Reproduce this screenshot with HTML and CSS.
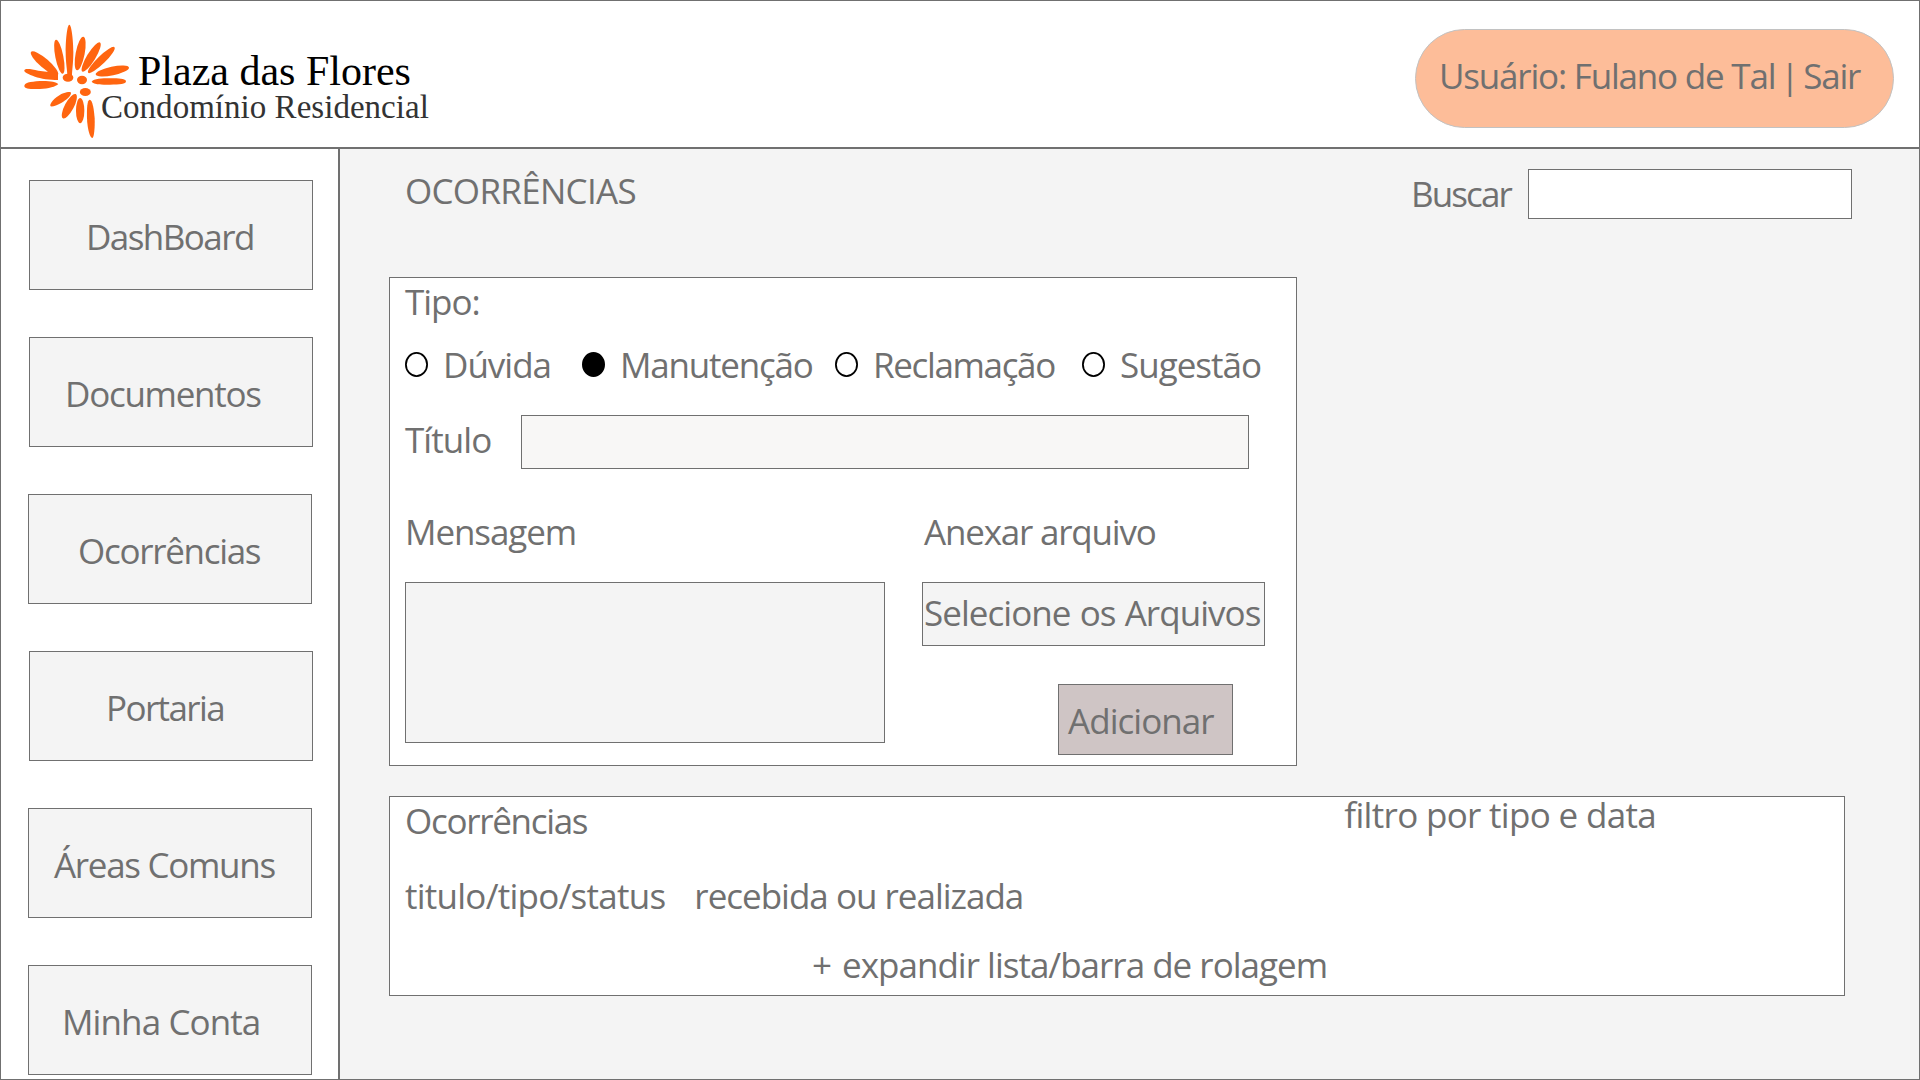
FILE: index.html
```html
<!DOCTYPE html>
<html lang="pt-BR">
<head>
<meta charset="utf-8">
<title>Plaza das Flores - Ocorrências</title>
<link rel="stylesheet" href="styles.css">
</head>
<body>
<div class="page">
  <header class="header">
    <div class="brand">
      <svg class="brand-mark" viewBox="0 0 390 390" fill="#ff6510">
        <path d="M178 29C185 29 190 80 190 110C190 145 186 165 186 182L172 182C172 165 167 145 167 110C167 80 171 29 178 29Z"/>
        <ellipse cx="148" cy="125" rx="52" ry="12" transform="rotate(78.7 148 125)"/>
        <ellipse cx="210.500" cy="115.500" rx="51" ry="13.500" transform="rotate(101 210.500 115.500)"/>
        <ellipse cx="243.500" cy="126" rx="51" ry="13" transform="rotate(121.300 243.500 126)"/>
        <ellipse cx="274" cy="135" rx="55" ry="12" transform="rotate(135.800 274 135)"/>
        <ellipse cx="307" cy="168" rx="51" ry="13" transform="rotate(-12 307 168)"/>
        <path d="M245 200C252 191 275 190 300 190C330 189 348 192 348 199C348 207 330 209 300 209C275 209 252 209 245 200Z"/>
        <ellipse cx="103.500" cy="145" rx="53" ry="14" transform="rotate(40.700 103.500 145)"/>
        <path d="M43 166C45 160 62 162 85 167L110 170L125 165L144 178V195C120 195 92 191 75 185C55 178 41 172 43 166Z"/>
        <path d="M43 213C43 204 58 200 90 198C120 197 138 201 145 207C138 215 115 221 90 222C60 223 43 221 43 213Z"/>
        <path d="M121 273C118 262 145 240 160 235C175 230 184 230 183 235C182 245 168 256 155 263C140 271 124 277 121 273Z"/>
        <ellipse cx="178" cy="273.500" rx="41" ry="13.500" transform="rotate(-62 178 273.500)"/>
        <ellipse cx="210.500" cy="287" rx="12.500" ry="38"/>
        <path d="M239 254C248 254 252 285 254 310C255 340 252 369 247 369C239 369 232 340 231 310C230 280 232 254 239 254Z"/>
        <ellipse cx="174" cy="188" rx="16" ry="12"/>
        <ellipse cx="216" cy="195" rx="15" ry="12.500"/>
        <ellipse cx="226" cy="231" rx="16.500" ry="12"/>
      </svg>
      <div class="brand-text">
        <div class="brand-name">Plaza das Flores</div>
        <div class="brand-sub">Condomínio Residencial</div>
      </div>
    </div>
    <div class="user-pill">Usuário: Fulano de Tal <span class="divider">|</span> Sair</div>
  </header>

  <div class="body">
    <nav class="sidebar">
      <a class="nav-item nav-dashboard">DashBoard</a>
      <a class="nav-item nav-documentos">Documentos</a>
      <a class="nav-item nav-ocorrencias">Ocorrências</a>
      <a class="nav-item nav-portaria">Portaria</a>
      <a class="nav-item nav-areas">Áreas Comuns</a>
      <a class="nav-item nav-conta">Minha Conta</a>
    </nav>

    <main class="main">
      <div class="topbar">
        <h1 class="title">OCORRÊNCIAS</h1>
        <div class="search">
          <label class="search-label" for="busca">Buscar</label>
          <input class="field search-input" id="busca" type="text">
        </div>
      </div>

      <form class="form-panel">
        <div class="type-label">Tipo:</div>
        <div class="options">
          <div class="option"><svg class="radio" viewBox="0 0 23 25"><ellipse cx="11.500" cy="12.500" rx="10.600" ry="11.600"/></svg><span class="opt-duvida">Dúvida</span></div>
          <div class="option"><svg class="radio radio-on" viewBox="0 0 23 25"><ellipse cx="11.500" cy="12.500" rx="10.600" ry="11.600"/></svg><span class="opt-manutencao">Manutenção</span></div>
          <div class="option"><svg class="radio" viewBox="0 0 23 25"><ellipse cx="11.500" cy="12.500" rx="10.600" ry="11.600"/></svg><span class="opt-reclamacao">Reclamação</span></div>
          <div class="option"><svg class="radio" viewBox="0 0 23 25"><ellipse cx="11.500" cy="12.500" rx="10.600" ry="11.600"/></svg><span class="opt-sugestao">Sugestão</span></div>
        </div>
        <div class="title-row">
          <label class="title-label" for="titulo">Título</label>
          <input class="field title-input" id="titulo" type="text">
        </div>
        <div class="details">
          <div class="message">
            <label class="message-label" for="mensagem">Mensagem</label>
            <textarea class="field message-input" id="mensagem"></textarea>
          </div>
          <div class="attach">
            <div class="attach-label">Anexar arquivo</div>
            <button class="button select-button" type="button">Selecione os Arquivos</button>
            <button class="button add-button" type="button">Adicionar</button>
          </div>
        </div>
      </form>

      <section class="list-panel">
        <div class="list-head">
          <h2 class="list-title">Ocorrências</h2>
          <div class="list-filter">filtro por tipo e data</div>
        </div>
        <div class="list-row">
          <span class="list-fields">titulo/tipo/status</span>
          <span class="list-origin">recebida ou realizada</span>
        </div>
        <div class="list-more"><span class="plus">+</span> expandir lista/barra de rolagem</div>
      </section>
    </main>
  </div>
</div>
</body>
</html>
```
FILE: styles.css
```css
* { box-sizing: border-box; }

body {
  margin: 0;
  color: #707070;
  font: 35px/47px "Open Sans", "Noto Sans", sans-serif;
  letter-spacing: -1px;
  white-space: nowrap;
}

h1, h2 { margin: 0; font: inherit; }

.page {
  display: flex;
  flex-direction: column;
  width: 1920px;
  height: 1080px;
  overflow: hidden;
  border: 1px solid #707070;
  background: #fff;
}

/* Header */
.header {
  display: flex;
  justify-content: space-between;
  align-items: flex-start;
  height: 148px;
  flex: none;
  padding-right: 25px;
  border-bottom: 2px solid #707070;
}
.brand { display: flex; align-items: flex-start; }
.brand-mark { width: 130px; height: 130px; margin: 14px -40px 0 9px; flex: none; }
.brand-text { margin-top: 49px; font-family: "Liberation Serif", serif; letter-spacing: 0; }
.brand-name { padding-left: 38px; font-size: 42px; line-height: 42px; color: #000; letter-spacing: 0; }
.brand-sub { margin-top: -3px; padding-left: 1px; font-size: 33px; line-height: 36px; color: #333; letter-spacing: 0.03px; }
.user-pill {
  width: 479px;
  height: 99px;
  margin-top: 28px;
  padding: 22px 0 0 23px;
  border: 1px solid #c2c2c2;
  border-radius: 50px;
  background: #fdbd99;
  letter-spacing: -1.2px;
}
.divider { margin: 0 -3px; }

.body { display: flex; flex: 1; }

/* Sidebar */
.sidebar {
  display: flex;
  flex-direction: column;
  gap: 47px;
  width: 339px;
  padding: 31px 0 0 28px;
  border-right: 2px solid #707070;
  background: #fff;
}
.nav-item {
  width: 284px;
  height: 110px;
  flex: none;
  padding-top: 32px;
  border: 1px solid #707070;
  background: #f4f4f4;
}
.nav-dashboard { padding-left: 56px; letter-spacing: -1.55px; }
.nav-documentos { padding-left: 35px; letter-spacing: -1.27px; }
.nav-ocorrencias { margin-left: -1px; padding-left: 49px; letter-spacing: -1.3px; }
.nav-portaria { padding-left: 76px; letter-spacing: -1.6px; }
.nav-areas { margin-left: -1px; padding-left: 25px; letter-spacing: -1.3px; }
.nav-conta { margin-left: -1px; padding-left: 33px; letter-spacing: -0.9px; }

/* Main area */
.main { flex: 1; background: #f4f4f4; }
.topbar {
  display: flex;
  justify-content: space-between;
  align-items: flex-start;
  height: 128px;
  padding: 18px 67px 0 65px;
}
.title { letter-spacing: -0.7px; }
.search { display: flex; margin-top: 2px; }
.search-label { width: 117px; margin-top: 1px; letter-spacing: -1.9px; }

.field {
  display: block;
  margin: 0;
  padding: 0 10px;
  border: 1px solid #707070;
  border-radius: 0;
  outline: 0;
  color: inherit;
  font: inherit;
}
.search-input { width: 324px; height: 50px; background: #fff; }

/* Form */
.form-panel {
  width: 908px;
  height: 489px;
  margin-left: 49px;
  padding-left: 15px;
  border: 1px solid #707070;
  background: #fff;
}
.options {
  display: grid;
  grid-template-columns: 177px 253px 247px auto;
  margin-top: 16px;
}
.option { display: flex; gap: 15px; }
.radio { width: 23px; height: 25px; margin-top: 11px; flex: none; fill: #fff; stroke: #000; stroke-width: 1.8; }
.radio-on { fill: #000; }
.opt-manutencao { letter-spacing: -1.22px; }
.opt-reclamacao { letter-spacing: -1.35px; }
.opt-sugestao { letter-spacing: -1px; }

.title-row { display: flex; margin-top: 27px; }
.title-label { width: 116px; padding-top: 1px; letter-spacing: -0.95px; }
.title-input { width: 728px; height: 54px; background: #f8f7f6; }

.details { display: flex; gap: 37px; margin-top: 39px; }
.message-label { display: block; letter-spacing: -1.1px; }
.message-input { width: 480px; height: 161px; margin-top: 27px; background: #f4f4f4; resize: none; }
.attach-label { padding-left: 2px; letter-spacing: -1.2px; }
.button {
  display: block;
  margin: 0;
  border: 1px solid #707070;
  border-radius: 0;
  color: inherit;
  font: inherit;
  text-align: left;
  white-space: nowrap;
}
.select-button { width: 343px; margin-top: 27px; padding: 6px 0 9px 1px; background: #f4f4f4; letter-spacing: -0.95px; word-spacing: 1px; }
.add-button { width: 175px; margin: 38px 0 0 136px; padding: 12px 0 10px 9px; background: #cfc5c5; letter-spacing: -0.95px; }

/* Occurrence list */
.list-panel {
  width: 1456px;
  height: 200px;
  margin: 30px 0 0 49px;
  padding-left: 15px;
  border: 1px solid #707070;
  background: #fff;
}
.list-head { display: flex; justify-content: space-between; padding-right: 188px; }
.list-title { letter-spacing: -1.3px; }
.list-filter { margin-top: -6px; letter-spacing: -0.68px; }
.list-row { display: flex; gap: 29px; margin-top: 28px; }
.list-fields { letter-spacing: -0.75px; }
.list-more { margin: 22px 0 0 407px; letter-spacing: -1px; }
.plus { margin-right: 3px; }
```
